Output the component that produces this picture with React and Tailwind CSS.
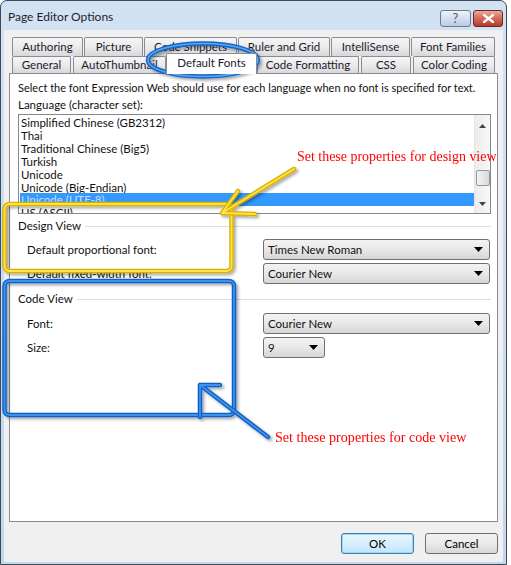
import React from "react";

const UI = { fontFamily: "Lato, 'Noto Sans', sans-serif" };

function Tri() {
  return (
    <svg width="9" height="5" viewBox="0 0 9 5" className="shrink-0">
      <path d="M0 0 H9 L4.5 5 Z" fill="#000" />
    </svg>
  );
}

function Combo({ text, wide = true }) {
  return (
    <div
      className={
        (wide ? "w-[227px] " : "w-[62px] ") +
        "h-[21px] rounded-[3px] border border-[#707070] bg-linear-to-b from-[#f3f3f3] via-[#e8e8e8] to-[#d6d6d6] flex items-center pl-[4px] pr-[6px] justify-between"
      }
    >
      <span className="text-[11.5px] leading-[14px] text-[#111]">{text}</span>
      <Tri />
    </div>
  );
}

function Tab({ label, cls }) {
  return (
    <div
      className={
        "h-full border border-[#898c95] border-b-0 rounded-t-[2px] bg-linear-to-b from-[#f5f5f5] via-[#ebebeb] to-[#d8d8d8] flex items-center justify-center text-[11.5px] leading-[14px] text-[#1a1a2e] whitespace-nowrap overflow-hidden " +
        cls
      }
    >
      {label}
    </div>
  );
}

const items = [
  "Simplified Chinese (GB2312)",
  "Thai",
  "Traditional Chinese (Big5)",
  "Turkish",
  "Unicode",
  "Unicode (Big-Endian)",
];

export default function App() {
  return (
    <div className="w-[511px] h-[565px] bg-white relative overflow-hidden" style={UI}>
      <div className="w-[507px] h-[565px] rounded-t-[7px] border border-[#3b4a5c] bg-linear-to-b from-[#d3e2f3] to-[#c3d6ec] flex flex-col">
        {/* title bar */}
        <div className="h-[29px] shrink-0 flex items-center pl-[7px] pr-[3px] relative">
          <span className="text-[12px] leading-[16px] text-[#1e1e2e] mt-[2px]">Page Editor Options</span>
          <div className="ml-auto flex gap-[2px] mt-[5px]">
            <div className="w-[31px] h-[17px] rounded-[3px] border border-[#6b7a8f] bg-linear-to-b from-[#eef3f9] to-[#b9cce4] flex items-center justify-center text-[13px] leading-[13px] text-[#5a5a5a]">
              ?
            </div>
            <div className="w-[30px] h-[17px] rounded-[3px] border border-[#6a2a22] bg-linear-to-b from-[#e9a99d] via-[#d26a5b] to-[#b6372a] flex items-center justify-center">
              <svg width="11" height="9" viewBox="0 0 11 9">
                <path d="M1 1 L10 8 M10 1 L1 8" stroke="#fff" strokeWidth="2.4" strokeLinecap="square" />
              </svg>
            </div>
          </div>
        </div>
        {/* client */}
        <div className="flex-1 mx-[3px] mb-[3px] bg-[#f0f0f0] flex flex-col px-[5px] pt-[7px] pb-[8px]">
          {/* tabs */}
          <div className="h-[36px] pl-[3px] flex flex-col">
            <div className="h-[19px] flex">
              <Tab label="Authoring" cls="w-[71px]" />
              <Tab label="Picture" cls="w-[59px] ml-[1px]" />
              <Tab label="Code Snippets" cls="w-[93px] ml-[1px]" />
              <Tab label="Ruler and Grid" cls="w-[92px] ml-[1px]" />
              <Tab label="IntelliSense" cls="w-[79px] ml-[1px]" />
              <Tab label="Font Families" cls="w-[84px] ml-[1px]" />
            </div>
            <div className="h-[17px] flex items-end">
              <Tab label="General" cls="w-[59px]" />
              <Tab label="AutoThumbnail" cls="w-[93px] ml-[2px]" />
              <div className="w-[91px] h-[21px] -mb-[1px] relative z-10 border border-[#898c95] border-b-0 rounded-t-[2px] bg-white flex items-center justify-center text-[11.5px] leading-[14px] text-[#1a1a2e] pb-[3px] whitespace-nowrap">
                Default Fonts
              </div>
              <Tab label="Code Formatting" cls="w-[102px] ml-[0px]" />
              <Tab label="CSS" cls="w-[50px] ml-[2px]" />
              <Tab label="Color Coding" cls="w-[82px] ml-[2px]" />
            </div>
          </div>
          {/* panel */}
          <div className="h-[449px] border border-[#898c95] bg-white flex flex-col text-[11.5px] leading-[14px] text-[#111]">
            <div className="pl-[8px] mt-[7px] whitespace-nowrap text-[11px]">
              Select the font Expression Web should use for each language when no font is specified for text.
            </div>
            <div className="pl-[8px] mt-[3px]">Language (character set):</div>
            <div className="ml-[8px] mr-[6px] mt-[2px] h-[100px] border border-[#828790] flex overflow-hidden">
              <div className="flex-1 flex flex-col pt-[1px] pl-[1px]">
                {items.map((t) => (
                  <div key={t} className="h-[13px] leading-[13px] pl-[1px] whitespace-nowrap">
                    {t}
                  </div>
                ))}
                <div className="h-[13px] leading-[13px] pl-[1px] bg-[#3399ff] text-[#c7ddf5] whitespace-nowrap mt-[-1px]">
                  Unicode (UTF-8)
                </div>
                <div className="h-[13px] leading-[13px] pl-[1px] whitespace-nowrap">US (ASCII)</div>
              </div>
              <div className="w-[16px] bg-linear-to-r from-[#ececec] to-[#f8f8f8] border-l border-[#e4e4e4] flex flex-col items-center">
                <svg width="7" height="4" viewBox="0 0 7 4" className="mt-[9px]">
                  <path d="M0 4 H7 L3.5 0 Z" fill="#444" />
                </svg>
                <div className="mt-[42px] w-[14px] h-[16px] rounded-[2px] border border-[#969696] bg-linear-to-r from-[#f4f4f4] to-[#d9d9d9]" />
                <svg width="7" height="4" viewBox="0 0 7 4" className="mt-auto mb-[7px]">
                  <path d="M0 0 H7 L3.5 4 Z" fill="#444" />
                </svg>
              </div>
            </div>
            {/* Design View */}
            <div className="flex items-center pl-[8px] mr-[6px] mt-[5px]">
              <span>Design View</span>
              <div className="flex-1 h-px bg-[#d5dfe5] ml-[4px]" />
            </div>
            <div className="flex items-center mt-[6px]">
              <div className="w-[253px] pl-[17px]">Default proportional font:</div>
              <Combo text="Times New Roman" />
            </div>
            <div className="flex items-center mt-[3px]">
              <div className="w-[253px] pl-[17px]">Default fixed-width font:</div>
              <Combo text="Courier New" />
            </div>
            {/* Code View */}
            <div className="flex items-center pl-[8px] mr-[6px] mt-[8px]">
              <span>Code View</span>
              <div className="flex-1 h-px bg-[#d5dfe5] ml-[4px]" />
            </div>
            <div className="flex items-center mt-[7px]">
              <div className="w-[253px] pl-[17px]">Font:</div>
              <Combo text="Courier New" />
            </div>
            <div className="flex items-center mt-[3px]">
              <div className="w-[253px] pl-[17px]">Size:</div>
              <Combo text="9" wide={false} />
            </div>
          </div>
          {/* buttons */}
          <div className="flex justify-end gap-[11px] mt-[11px]">
            <div className="w-[73px] h-[21px] rounded-[3px] border border-[#3c7fb1] bg-linear-to-b from-[#eaf6fd] via-[#d9f0fc] to-[#bee6fd] flex items-center justify-center text-[11.5px] leading-[14px] shadow-[inset_0_0_0_1px_#9fd5f5]">
              OK
            </div>
            <div className="w-[73px] h-[21px] rounded-[3px] border border-[#707070] bg-linear-to-b from-[#f2f2f2] via-[#ebebeb] to-[#d6d6d6] flex items-center justify-center text-[11.5px] leading-[14px]">
              Cancel
            </div>
          </div>
        </div>
      </div>

      {/* annotations overlay */}
      <svg className="absolute inset-0 pointer-events-none" width="511" height="565" viewBox="0 0 511 565">
        <defs>
          <filter id="sh" x="-10%" y="-10%" width="130%" height="130%">
            <feDropShadow dx="2" dy="2" stdDeviation="1.5" floodColor="#000" floodOpacity="0.35" />
          </filter>
        </defs>
        <g filter="url(#sh)">
          <ellipse cx="203" cy="60" rx="55" ry="16.5" fill="none" stroke="#1565c8" strokeWidth="4.5" />
          <ellipse cx="203" cy="60" rx="55" ry="16.5" fill="none" stroke="#5aa7ee" strokeWidth="1.5" />
        </g>
        <g filter="url(#sh)">
          <rect x="4.5" y="204" width="227" height="67" rx="5" fill="none" stroke="#d9b000" strokeWidth="4.5" />
          <rect x="4.5" y="204" width="227" height="67" rx="5" fill="none" stroke="#ffe44a" strokeWidth="1.8" />
          <path d="M294 169 L222 213 M222 213 L238 191 M222 213 L255 214" fill="none" stroke="#d9b000" strokeWidth="4.5" strokeLinecap="round" />
          <path d="M294 169 L222 213 M222 213 L238 191 M222 213 L255 214" fill="none" stroke="#ffe44a" strokeWidth="1.8" strokeLinecap="round" />
        </g>
        <g filter="url(#sh)">
          <rect x="4.5" y="281" width="229.5" height="134" rx="5" fill="none" stroke="#1160c8" strokeWidth="4.5" />
          <rect x="4.5" y="281" width="229.5" height="134" rx="5" fill="none" stroke="#3d92ec" strokeWidth="1.8" />
          <path d="M268 437 L200 385 M200 385 L200 417 M200 385 L220 385" fill="none" stroke="#1160c8" strokeWidth="4.5" strokeLinecap="round" />
          <path d="M268 437 L200 385 M200 385 L200 417 M200 385 L220 385" fill="none" stroke="#3d92ec" strokeWidth="1.8" strokeLinecap="round" />
        </g>
      </svg>
      <div
        className="absolute left-[297px] top-[147px] text-[15px] leading-[18px] text-[#ff0000] whitespace-nowrap scale-x-[0.93] origin-left"
        style={{ fontFamily: "'Liberation Serif', serif" }}
      >
        Set these properties for design view
      </div>
      <div
        className="absolute left-[275px] top-[428px] text-[15px] leading-[18px] text-[#ff0000] whitespace-nowrap scale-x-[0.94] origin-left"
        style={{ fontFamily: "'Liberation Serif', serif" }}
      >
        Set these properties for code view
      </div>
    </div>
  );
}
